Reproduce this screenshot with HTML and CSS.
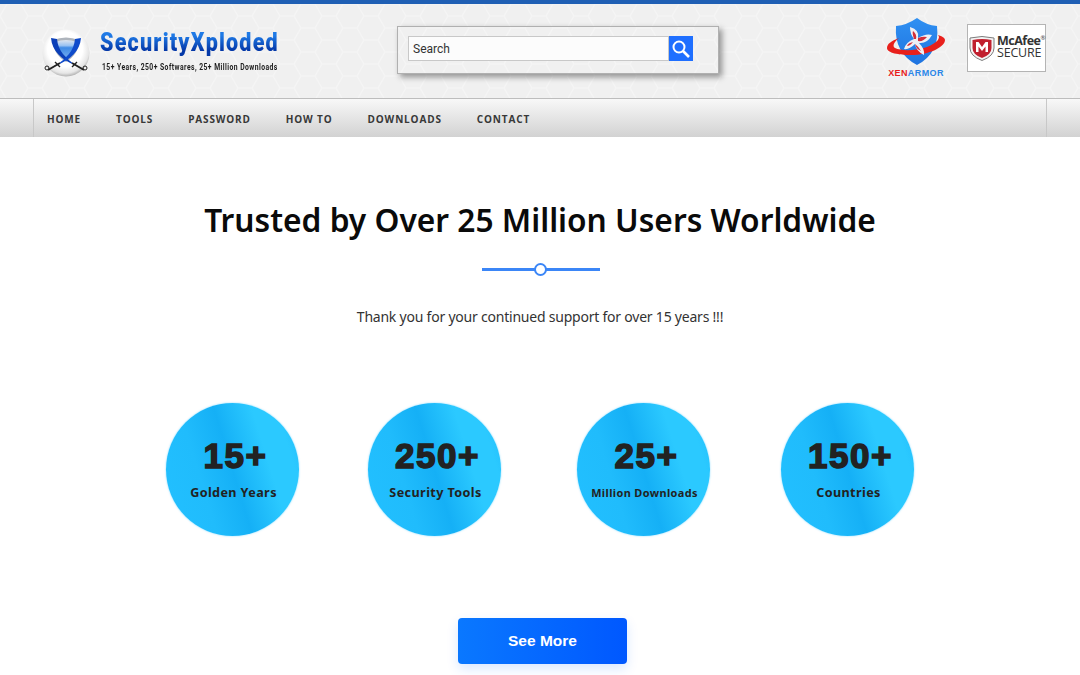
FILE: index.html
```html
<!DOCTYPE html>
<html lang="en">

<head>
    <meta charset="UTF-8">
    <title>SecurityXploded</title>
    <link rel="stylesheet" href="styles.css">
</head>

<body>

    <header class="site-header">
        <div class="brand">
            <svg class="brand__logo" width="48" height="48" viewBox="0 0 48 48">
                <defs>
                    <radialGradient id="ball" cx="0.48" cy="0.42" r="0.6">
                        <stop offset="0.62" stop-color="#fff"/>
                        <stop offset="0.85" stop-color="#e6e6e6"/>
                        <stop offset="1" stop-color="#a4a4a4"/>
                    </radialGradient>
                    <linearGradient id="shield" x1="0" y1="0" x2="0" y2="1">
                        <stop offset="0" stop-color="#dfe6ef"/>
                        <stop offset="0.28" stop-color="#9cc4f2"/>
                        <stop offset="0.4" stop-color="#3f8be6"/>
                        <stop offset="1" stop-color="#7db0ee"/>
                    </linearGradient>
                </defs>
                <circle cx="24" cy="24" r="23.5" fill="url(#ball)"/>
                <path d="M11 11Q24 6 37 11Q37 25 24 33Q11 25 11 11Z" fill="#aeb4bc"/>
                <path d="M13 13Q24 9 35 13Q35 24 24 30.5Q13 24 13 13Z" fill="url(#shield)"/>
                <path d="M9 9C10 22 20 31 33 36C24 29 16 22 15 10Z" fill="#0b3fb8"/>
                <path d="M39 9C38 22 28 31 15 36C24 29 32 22 33 10Z" fill="#0f4bcb"/>
                <path d="M30 34L42 41M18 34L6 41" stroke="#222" stroke-width="2"/>
                <path d="M30 38L35 33M18 38L13 33" stroke="#222" stroke-width="1.4"/>
                <circle cx="5" cy="39" r="2" fill="none" stroke="#222"/>
                <circle cx="43" cy="39" r="2" fill="none" stroke="#222"/>
            </svg>
            <div class="brand__text">
                <div class="brand__name">SecurityXploded</div>
                <div class="brand__tag">15+ Years, 250+ Softwares, 25+ Million Downloads</div>
            </div>
        </div>

        <div class="search-box">
            <div class="search-box__input">Search</div>
            <div class="search-box__button">
                <svg width="20" height="20" viewBox="0 0 20 20">
                    <circle cx="8" cy="8" r="5.5" fill="none" stroke="#fff" stroke-width="2"/>
                    <path d="M12 12L18 18" stroke="#fff" stroke-width="2.6"/>
                </svg>
            </div>
        </div>

        <div class="partners">
            <div class="xen">
                <svg width="58" height="51" viewBox="0 0 58 51">
                    <defs>
                        <linearGradient id="xenShield" x1="0" y1="0" x2="0" y2="1">
                            <stop offset="0" stop-color="#2f90f2"/>
                            <stop offset="1" stop-color="#1f74e0"/>
                        </linearGradient>
                    </defs>
                    <path d="M30 0Q39 7 50 8Q53 35 30 47Q7 35 9 8Q20 7 30 0Z" fill="url(#xenShield)"/>
                    <path d="M12 20C4 23 0 26 0 30C0 35 12 37 24 37C42 37 58 29 58 22C58 20 55 18 51 17C54 20 50 25 40 29C28 33 14 33 8 30C5 28 7 24 12 20Z" fill="#e8201c"/>
                    <path d="M23 9Q33 12 31 20Q39 15 45 17Q40 26 32 25Q38 31 37 37Q29 33 28 26Q22 32 17 31Q19 24 27 21Q23 16 23 9Z" fill="#eef0f4"/>
                    <path d="M31 20Q36 18 40 19Q36 24 31 23ZM28 26Q32 29 34 33Q29 31 28 26ZM27 21Q25 15 26 13Q30 16 29 21ZM26 24Q23 28 20 28Q21 25 26 24Z" fill="#d22f3a"/>
                </svg>
                <div class="xen__name"><span class="xen__red">XEN</span>ARMOR</div>
            </div>
            <div class="mcafee">
                <svg class="mcafee__shield" width="26" height="26" viewBox="0 0 26 26">
                    <path d="M1 3Q13 0 25 3V13Q25 21 13 25.5Q1 21 1 13Z" fill="#f4f4f4" stroke="#7d7d7d" stroke-width="1"/>
                    <path d="M3.5 5Q13 3 22.5 5V13Q22.5 19.5 13 23Q3.5 19.5 3.5 13Z" fill="#c1202f"/>
                    <path d="M7 17V7H9.5L13 12L16.5 7H19V17H16.5V11.5L13 16L9.5 11.5V17Z" fill="#fff"/>
                </svg>
                <div class="mcafee__text">
                    <div class="mcafee__name">McAfee<sup class="mcafee__reg">®</sup></div>
                    <div class="mcafee__secure">SECURE</div>
                </div>
            </div>
        </div>
    </header>

    <nav class="main-nav">
        <ul class="main-nav__list">
            <li><a href="#">HOME</a></li>
            <li><a href="#">TOOLS</a></li>
            <li><a href="#">PASSWORD</a></li>
            <li><a href="#">HOW TO</a></li>
            <li><a href="#">DOWNLOADS</a></li>
            <li><a href="#">CONTACT</a></li>
        </ul>
    </nav>

    <main class="trusted">
        <h1 class="trusted__title">Trusted by Over 25 Million Users Worldwide</h1>
        <div class="divider"><span class="divider__dot"></span></div>
        <p class="trusted__sub">Thank you for your continued support for over 15 years !!!</p>

        <div class="stats">
            <div class="stat stat--first">
                <div class="stat__num">15+</div>
                <div class="stat__label">Golden Years</div>
            </div>
            <div class="stat stat--second">
                <div class="stat__num">250+</div>
                <div class="stat__label">Security Tools</div>
            </div>
            <div class="stat stat--third">
                <div class="stat__num">25+</div>
                <div class="stat__label stat__label--small">Million Downloads</div>
            </div>
            <div class="stat stat--fourth">
                <div class="stat__num">150+</div>
                <div class="stat__label">Countries</div>
            </div>
        </div>

        <a class="see-more" href="#">See More</a>
    </main>

</body>

</html>
```

FILE: styles.css
```css
* {
    box-sizing: border-box;
}

html,
body {
    margin: 0;
    height: 675px;
    overflow: hidden;
    background: #fff;
}

body {
    font-family: "Open Sans", sans-serif;
}

/* header */
.site-header {
    height: 98px;
    border-top: 4px solid #1f5fb4;
    background-color: #f0f0f0;
    background-image: url("data:image/svg+xml,%3Csvg xmlns='http://www.w3.org/2000/svg' width='42' height='24'%3E%3Cpath d='M0 12L7 0H21L28 12L21 24H7ZM28 12H42' fill='none' stroke='%23f5f5f5' stroke-width='1.2'/%3E%3C/svg%3E");
    display: flex;
    align-items: flex-start;
}

.brand {
    display: flex;
    width: 397px;
    padding: 25px 0 0 42px;
}

.brand__logo {
    flex: none;
}

.brand__text {
    margin: -1px 0 0 10px;
}

.brand__name {
    width: 210px;
    font-family: Roboto, sans-serif;
    font-weight: 900;
    font-size: 25px;
    line-height: 30px;
    letter-spacing: 1.4px;
    white-space: nowrap;
    transform: scaleX(0.86);
    transform-origin: left center;
    background: linear-gradient(#1f7ae6 25%, #0438a8 75%);
    -webkit-background-clip: text;
    background-clip: text;
    color: transparent;
}

.brand__tag {
    font-family: Roboto, sans-serif;
    font-weight: 700;
    font-size: 8.5px;
    line-height: 10px;
    letter-spacing: 0.55px;
    margin: 4px 0 0 2px;
    color: #1c1c1c;
    white-space: nowrap;
    transform: scaleX(0.8);
    transform-origin: left center;
}

.search-box {
    width: 322px;
    height: 48px;
    margin-top: 22px;
    padding: 9px 10px;
    display: flex;
    border: 1px solid #b0b0b0;
    box-shadow: 3px 3px 6px rgba(0, 0, 0, 0.4);
}

.search-box__input {
    width: 261px;
    height: 25px;
    padding-left: 4px;
    background: #fcfcfc;
    border: 1px solid #c8c8c8;
    font-family: Roboto, sans-serif;
    font-size: 12px;
    line-height: 24px;
    color: #333;
}

.search-box__button {
    width: 24px;
    height: 25px;
    background: #1f6fff;
    display: flex;
    align-items: center;
    justify-content: center;
}

.partners {
    margin-left: auto;
    display: flex;
    align-items: flex-start;
    padding-right: 34px;
}

.xen {
    width: 58px;
    margin-top: 14px;
}

.xen svg {
    display: block;
}

.xen__name {
    font-family: "Liberation Sans", sans-serif;
    font-weight: 700;
    font-size: 9px;
    line-height: 9px;
    text-align: center;
    letter-spacing: 0.4px;
    white-space: nowrap;
    color: #2a86e8;
}

.xen__red {
    color: #e8201c;
}

.mcafee {
    width: 79px;
    height: 48px;
    margin: 20px 0 0 22px;
    padding: 10px 0 0 1px;
    display: flex;
    background: #fff;
    border: 1px solid #b4b4b4;
}

.mcafee__shield {
    flex: none;
}

.mcafee__text {
    margin-left: 2px;
    color: #333;
}

.mcafee__name {
    font-weight: 700;
    font-size: 12.5px;
    line-height: 12px;
    letter-spacing: -0.5px;
    white-space: nowrap;
}

.mcafee__reg {
    font-size: 6px;
    font-weight: 400;
    line-height: 0;
}

.mcafee__secure {
    font-size: 12.5px;
    line-height: 12px;
    letter-spacing: -0.2px;
}

/* nav */
.main-nav {
    height: 39px;
    padding: 0 33px;
    border-top: 1px solid #bdbdbd;
    background: linear-gradient(#f8f8f8, #d2d2d2);
}

.main-nav__list {
    list-style: none;
    margin: 0;
    padding: 0 0 3px 13px;
    height: 100%;
    display: flex;
    gap: 35px;
    align-items: center;
    border-left: 1px solid #c8c8c8;
    border-right: 1px solid #c8c8c8;
}

.main-nav__list a {
    font-weight: 700;
    font-size: 10px;
    letter-spacing: 0.85px;
    color: #383838;
    text-decoration: none;
}

/* content */
.trusted {
    display: flex;
    flex-direction: column;
    align-items: center;
}

.trusted__title {
    margin: 61px 0 0;
    font-family: "Noto Sans", sans-serif;
    font-weight: 600;
    font-size: 31.7px;
    line-height: 44px;
    color: #0a0a0a;
}

.divider {
    position: relative;
    width: 118px;
    height: 3px;
    margin-top: 26px;
    margin-left: 2px;
    background: #3b86f7;
}

.divider__dot {
    position: absolute;
    left: 52px;
    top: -5px;
    width: 13px;
    height: 13px;
    border-radius: 50%;
    background: #fff;
    border: 2px solid #3b86f7;
}

.trusted__sub {
    margin: 34px 0 0;
    font-family: "Noto Sans", sans-serif;
    font-size: 14px;
    letter-spacing: -0.22px;
    line-height: 24px;
    color: #333;
}

.stats {
    align-self: flex-start;
    display: flex;
    margin: 74px 0 0 166px;
}

.stat {
    width: 133px;
    height: 133px;
    border-radius: 50%;
    padding-top: 32px;
    text-align: center;
    color: #222;
    background: linear-gradient(73deg, #22c0ff 0%, #20bcfc 30%, #15b0f6 50%, #2bc9ff 72%, #2bc9ff 86%, #1fbbfb 100%);
    box-shadow: 0 0 2px rgba(40, 190, 255, 0.6);
}

.stat--second {
    margin-left: 69px;
}

.stat--third {
    margin-left: 76px;
}

.stat--fourth {
    margin-left: 71px;
}

.stat__num {
    padding-left: 6px;
    font-family: "Liberation Sans", sans-serif;
    font-weight: 700;
    font-size: 35px;
    line-height: 42px;
    letter-spacing: 1.5px;
    -webkit-text-stroke: 1.5px #222;
}

.stat__label {
    margin-top: 6px;
    padding-left: 2px;
    font-family: "Noto Sans", sans-serif;
    font-weight: 700;
    font-size: 12.6px;
    line-height: 20px;
    letter-spacing: 0.4px;
    white-space: nowrap;
}

.stat__label--small {
    font-size: 10.9px;
}

.see-more {
    width: 169px;
    height: 46px;
    margin-top: 82px;
    margin-left: 5px;
    border-radius: 4px;
    background: linear-gradient(90deg, #0a78ff, #0058ff);
    box-shadow: 0 5px 12px rgba(10, 100, 255, 0.15);
    color: #fff;
    font-family: "Liberation Sans", sans-serif;
    font-weight: 700;
    font-size: 15.5px;
    line-height: 45px;
    text-align: center;
    text-decoration: none;
}
```
